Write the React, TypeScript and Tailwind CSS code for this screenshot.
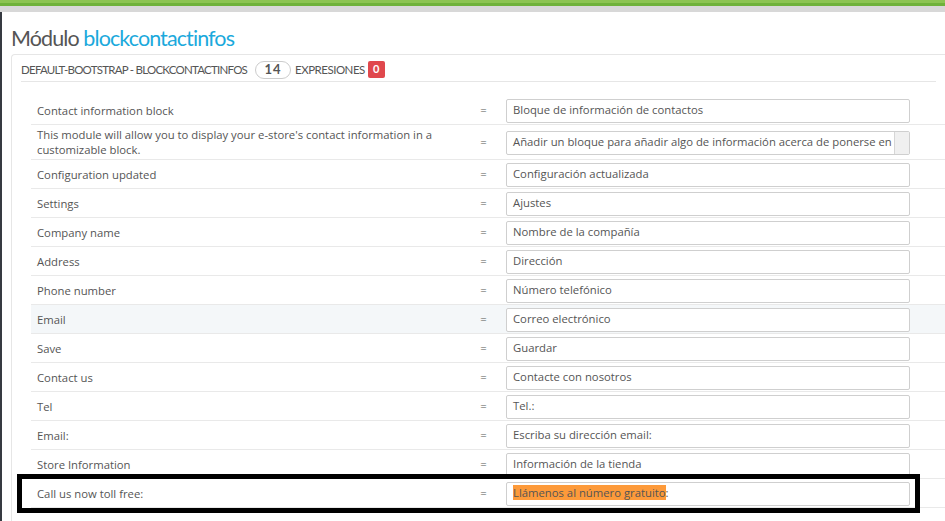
import React from 'react';

type Row = { label: React.ReactNode; value: string; tall?: boolean; hl?: boolean; mark?: boolean };

const rows: Row[] = [
  { label: 'Contact information block', value: 'Bloque de información de contactos' },
  {
    label: (
      <>
        This module will allow you to display your e-store's contact information in a
        <br />
        customizable block.
      </>
    ),
    value: 'Añadir un bloque para añadir algo de información acerca de ponerse en',
    tall: true,
  },
  { label: 'Configuration updated', value: 'Configuración actualizada' },
  { label: 'Settings', value: 'Ajustes' },
  { label: 'Company name', value: 'Nombre de la compañía' },
  { label: 'Address', value: 'Dirección' },
  { label: 'Phone number', value: 'Número telefónico' },
  { label: 'Email', value: 'Correo electrónico', hl: true },
  { label: 'Save', value: 'Guardar' },
  { label: 'Contact us', value: 'Contacte con nosotros' },
  { label: 'Tel', value: 'Tel.:' },
  { label: 'Email:', value: 'Escriba su dirección email:' },
  { label: 'Store Information', value: 'Información de la tienda' },
  { label: 'Call us now toll free:', value: 'Llámenos al número gratuito:', mark: true },
];

function TranslationRow({ row }: { row: Row }) {
  return (
    <div
      className={`flex items-center border-b border-[#e9e9e9] ${row.tall ? 'h-[35px]' : 'h-[29px]'} ${
        row.hl ? 'bg-[#f4f7f9]' : 'bg-white'
      }`}
    >
      <div className="w-[440px] pl-[6px] text-[11.3px] leading-[15px] text-[#555]">{row.label}</div>
      <div className="w-[25px] text-center text-[11.3px] text-[#555]">=</div>
      <div className="pl-[10px]">
        <div className="relative mt-[1px] flex h-[24px] w-[404px] items-center overflow-hidden rounded-[2px] border border-[#cfcfcf] bg-white pl-[6px] text-[11.3px] text-[#555]">
          {row.mark ? (
            <span>
              <span className="bg-[#fd9a3a]">Llámenos al número gratuito</span>:
            </span>
          ) : (
            <span className="whitespace-nowrap">{row.value}</span>
          )}
          {row.tall && (
            <div className="absolute top-0 right-0 h-full w-[15px] border-l border-[#d6d6d6] bg-[#f0f0f0]" />
          )}
        </div>
      </div>
    </div>
  );
}

export default function App() {
  return (
    <div className="relative h-[521px] w-[945px] overflow-hidden bg-white" style={{ fontFamily: '"Open Sans", sans-serif' }}>
      {/* top bars */}
      <div className="h-[3px] bg-[#8cc452]" />
      <div className="h-[3px] bg-[#6fb23a]" />
      <div className="h-[6px] bg-[#d8d8d8]" />

      <div className="flex">
        <div className="w-[2px] self-stretch bg-[#363a41]" />
        <div className="flex-1 pl-[9px]">
          <h1
            className="mt-[10px] h-[32px] text-[21.5px] leading-[32px] tracking-[-0.9px] text-[#555]"
            style={{ fontFamily: 'Lato, sans-serif' }}
          >
            Módulo <span className="text-[#1ba9dc]">blockcontactinfos</span>
          </h1>

          <div className="rounded-tl-[4px] border-t border-l border-[#e6e6e6] pb-[40px]">
            <div
              className="mx-[9px] flex h-[27px] items-center border-b border-[#e6e6e6] pt-[3px] text-[11.5px] text-[#555]"
              style={{ fontFamily: 'Lato, sans-serif' }}
            >
              <span className="tracking-[-0.75px]">DEFAULT-BOOTSTRAP - BLOCKCONTACTINFOS</span>
              <span className="ml-[8px] flex h-[18px] w-[36px] items-center justify-center rounded-full border border-[#ccc] text-[13px] font-bold tracking-[1px]">
                14
              </span>
              <span className="ml-[4px] tracking-[-0.5px]">EXPRESIONES</span>
              <span className="ml-[3px] flex h-[17px] w-[17px] items-center justify-center rounded-[2px] bg-[#e0484d] text-[11px] font-bold text-white">
                0
              </span>
            </div>

            <div className="mt-[14px] ml-[19px]">
              {rows.map((r, i) => (
                <TranslationRow key={i} row={r} />
              ))}
            </div>
          </div>
        </div>
      </div>

      {/* highlight frame */}
      <div className="absolute top-[474px] left-[17px] h-[39px] w-[903px] border-[5px] border-black" />
    </div>
  );
}
